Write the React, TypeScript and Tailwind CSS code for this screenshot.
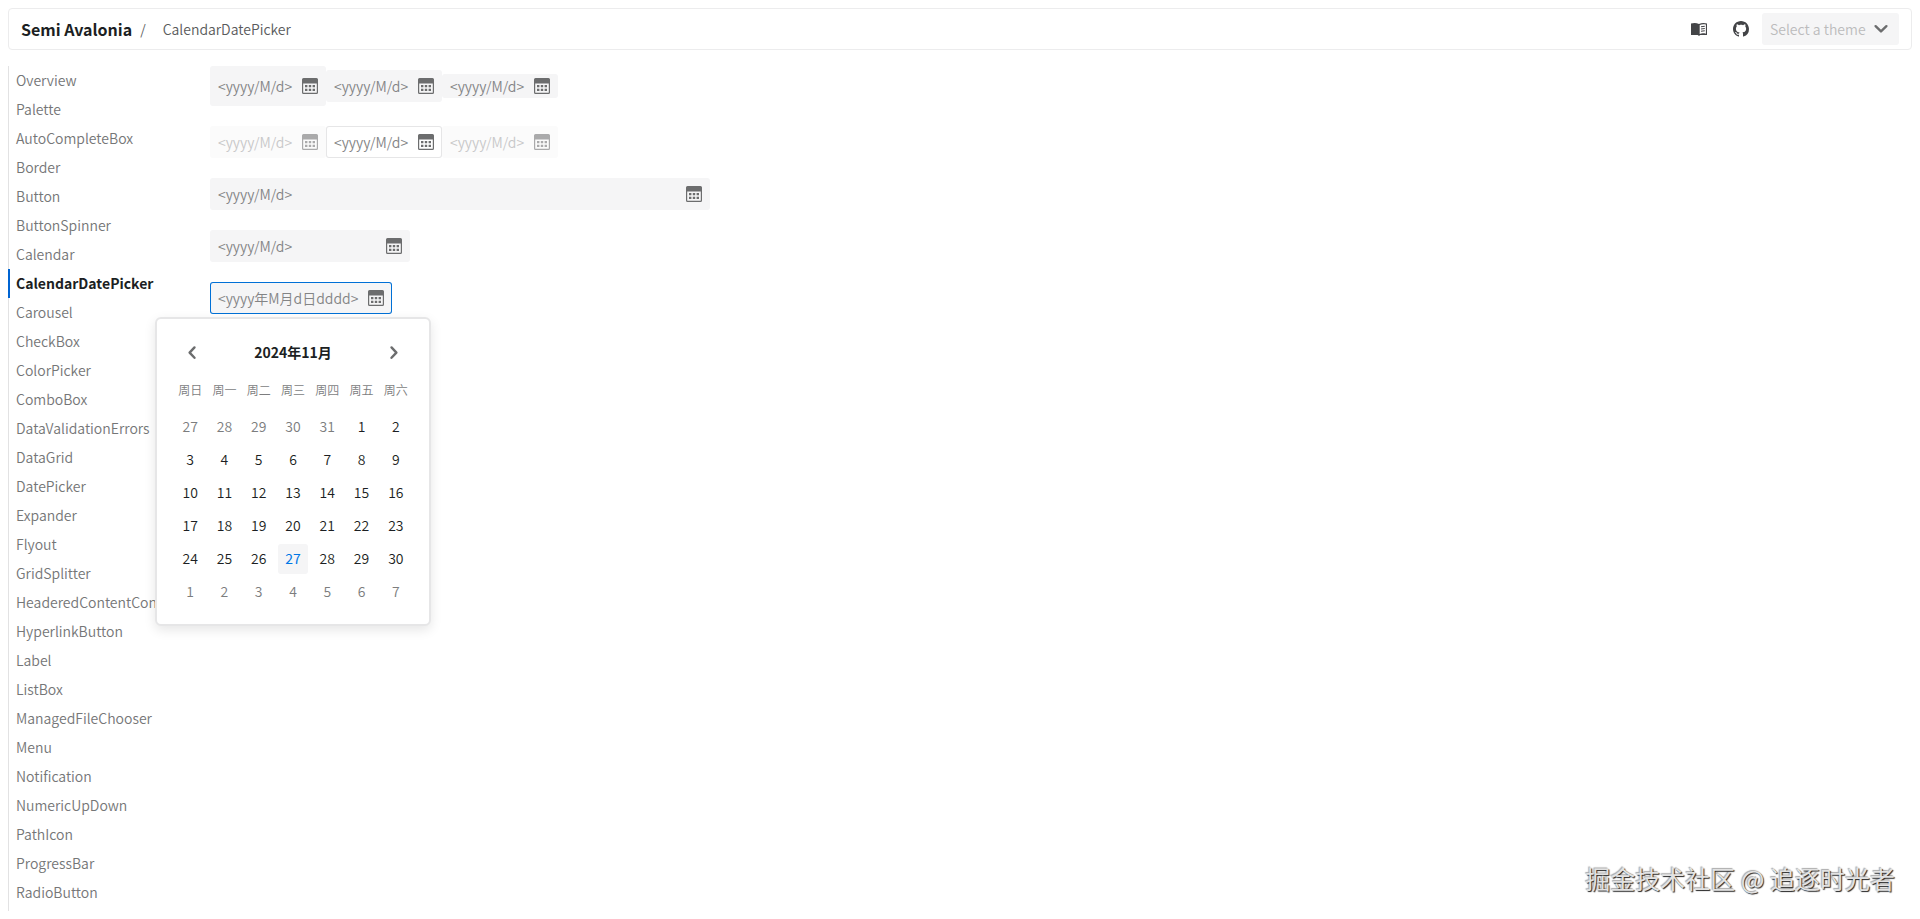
import React from "react";

const navItems = [
  "Overview",
  "Palette",
  "AutoCompleteBox",
  "Border",
  "Button",
  "ButtonSpinner",
  "Calendar",
  "CalendarDatePicker",
  "Carousel",
  "CheckBox",
  "ColorPicker",
  "ComboBox",
  "DataValidationErrors",
  "DataGrid",
  "DatePicker",
  "Expander",
  "Flyout",
  "GridSplitter",
  "HeaderedContentControl",
  "HyperlinkButton",
  "Label",
  "ListBox",
  "ManagedFileChooser",
  "Menu",
  "Notification",
  "NumericUpDown",
  "PathIcon",
  "ProgressBar",
  "RadioButton",
];

const weekDays = ["周日", "周一", "周二", "周三", "周四", "周五", "周六"];

const weeks = [
  [27, 28, 29, 30, 31, 1, 2],
  [3, 4, 5, 6, 7, 8, 9],
  [10, 11, 12, 13, 14, 15, 16],
  [17, 18, 19, 20, 21, 22, 23],
  [24, 25, 26, 27, 28, 29, 30],
  [1, 2, 3, 4, 5, 6, 7],
];

const CalendarIcon = () => (
  <svg viewBox="0 0 16 16" className="size-4" aria-hidden="true">
    <path
      fill="currentColor"
      fillRule="evenodd"
      d="M1.5 0h13A1.5 1.5 0 0 1 16 1.5v13a1.5 1.5 0 0 1-1.5 1.5h-13A1.5 1.5 0 0 1 0 14.5v-13A1.5 1.5 0 0 1 1.5 0zM1.200 5.400v8.800c0 .4.2.6.6.6h12.400c.4 0 .6-.2.6-.6V5.400z"
    />
    <path
      fill="currentColor"
      d="M3 7h2.4v2.2H3zM6.8 7h2.4v2.2H6.8zM10.6 7H13v2.2h-2.4zM3 10.8h2.4V13H3zM6.8 10.8h2.4V13H6.8zM10.6 10.8H13V13h-2.4z"
    />
  </svg>
);

const BookIcon = () => (
  <svg viewBox="0 0 16 16" className="size-4" aria-hidden="true">
    <path
      fill="currentColor"
      fillRule="evenodd"
      d="M0 2.6C2.6 1.6 5.400 1.7 8 3c2.600-1.300 5.400-1.400 8-.4V14H9.200c-.2.500-.6.700-1.200.7s-1-.2-1.200-.7H0zM8.700 4v9c1.900-.8 4-.8 6.200-.2V3.500C12.700 2.900 10.600 3.100 8.700 4z"
    />
    <path
      stroke="currentColor"
      strokeWidth="1.100"
      d="M10 5.800l3.800-.5M10 8l3.800-.5M10 10.200l3.800-.5"
    />
  </svg>
);

const GithubIcon = () => (
  <svg viewBox="0 0 16 16" className="size-4" aria-hidden="true">
    <path
      fill="currentColor"
      d="M8 0C3.580 0 0 3.580 0 8c0 3.540 2.290 6.530 5.470 7.590.4.070.55-.17.55-.38 0-.19-.01-.82-.01-1.490-2.010.37-2.530-.49-2.690-.94-.09-.23-.48-.94-.82-1.130-.28-.15-.68-.52-.01-.53.63-.01 1.080.58 1.230.82.72 1.210 1.870.87 2.330.66.07-.52.28-.87.51-1.070-1.780-.2-3.640-.89-3.640-3.950 0-.87.31-1.590.82-2.150-.08-.2-.36-1.020.08-2.120 0 0 .67-.21 2.200.82.64-.18 1.320-.27 2-.27s1.360.09 2 .27c1.530-1.040 2.200-.82 2.200-.82.44 1.100.16 1.920.08 2.120.51.56.82 1.270.82 2.150 0 3.070-1.870 3.750-3.650 3.950.29.25.54.73.54 1.480 0 1.070-.01 1.930-.01 2.200 0 .21.15.46.55.38A8.010 8.010 0 0 0 16 8c0-4.420-3.580-8-8-8z"
    />
  </svg>
);

const Chevron = ({ d }: { d: string }) => (
  <svg viewBox="0 0 16 16" className="size-4" fill="none" aria-hidden="true">
    <path
      d={d}
      stroke="currentColor"
      strokeWidth="2.400"
      strokeLinecap="round"
      strokeLinejoin="round"
    />
  </svg>
);

type PickerProps = {
  label: string;
  className?: string;
  placeholder?: string;
  disabled?: boolean;
};

function DatePicker({
  label,
  className = "h-8 w-[116px] bg-[#f5f5f6]",
  placeholder = "<yyyy/M/d>",
  disabled = false,
}: PickerProps) {
  return (
    <div
      className={`flex items-center gap-2 rounded-[3px] ${className} ${
        disabled ? "text-[#aaaaab]" : "text-[#6c6d6e]"
      }`}
    >
      <input
        type="text"
        aria-label={label}
        placeholder={placeholder}
        disabled={disabled}
        className={`ml-2 min-w-0 flex-1 bg-transparent outline-none ${
          disabled ? "placeholder:text-[#c8c8c9]" : "placeholder:text-[#838485]"
        }`}
      />
      <button
        type="button"
        aria-label="Open calendar"
        disabled={disabled}
        className="mr-2"
      >
        <CalendarIcon />
      </button>
    </div>
  );
}

function CalendarPopup() {
  return (
    <div className="absolute top-full -left-[55px] z-10 mt-[3px] w-[276px] rounded-md border-2 border-[#e6e6e7] bg-white px-4 pt-[15px] pb-4 shadow-[0_4px_12px_rgba(0,0,0,0.1)]">
      <div className="flex h-9 items-center justify-between px-[11px] text-[#6c6d6e]">
        <button type="button" aria-label="Previous month">
          <Chevron d="M10.500 3.400L5.600 8.600l4.900 5.200" />
        </button>
        <button type="button" className="font-semibold text-[#1c1f23]">
          2024年11月
        </button>
        <button type="button" aria-label="Next month">
          <Chevron d="M5.500 3.400L10.400 8.600l-4.900 5.200" />
        </button>
      </div>
      <table className="w-full table-fixed text-center">
        <thead>
          <tr className="h-10 text-xs text-[#7c7d7e]">
            {weekDays.map((day) => (
              <th key={day} className="p-0 font-[350]">
                {day}
              </th>
            ))}
          </tr>
        </thead>
        <tbody>
          {weeks.map((week, row) => (
            <tr key={row} className="h-[33px]">
              {week.map((day, col) => {
                const outside = (row === 0 && day > 7) || row === 5;
                const today = row === 4 && day === 27;
                return (
                  <td key={col} className="p-0">
                    <button
                      type="button"
                      className={`size-[30px] rounded-[3px] align-middle ${
                        today
                          ? "bg-[#f5f5f6] font-normal text-[#0077e6]"
                          : outside
                            ? "text-[#7c7d7e]"
                            : "text-[#1c1f23]"
                      }`}
                    >
                      {day}
                    </button>
                  </td>
                );
              })}
            </tr>
          ))}
        </tbody>
      </table>
    </div>
  );
}

export default function App() {
  return (
    <div className="flex h-screen flex-col gap-4 overflow-hidden bg-white p-2 font-['Noto_Sans_CJK_SC',sans-serif] text-sm leading-[21px] font-[350] text-[#1c1f23]">
      <header className="flex h-[42px] shrink-0 items-center rounded-[4px] border border-[#ececed] px-3">
        <h1 className="text-base font-semibold">Semi Avalonia</h1>
        <span className="ml-2 text-[#5a5b5c]">/</span>
        <span className="ml-[17px] text-[#5a5b5c]">CalendarDatePicker</span>
        <div className="ml-auto flex items-center text-[#434447]">
          <a href="#docs" aria-label="Documentation" className="mr-[26px]">
            <BookIcon />
          </a>
          <a href="#github" aria-label="GitHub" className="mr-[13px]">
            <GithubIcon />
          </a>
          <div className="relative">
            <select
              aria-label="Theme"
              className="h-8 w-[137px] appearance-none rounded-[3px] bg-[#f5f5f6] pl-2 text-[#bcbcbd]"
            >
              <option>Select a theme</option>
            </select>
            <span className="pointer-events-none absolute top-2 right-2.5 text-[#6c6d6e]">
              <Chevron d="M2.600 5.200L8 10.400l5.400-5.200" />
            </span>
          </div>
        </div>
      </header>

      <div className="flex min-h-0 flex-1">
        <nav className="w-[162px] shrink-0 border-l border-[#e2e2e3]">
          <ul>
            {navItems.map((item) => (
              <li key={item} className="-ml-px">
                <a
                  href={`#${item}`}
                  className={`block border-l-2 py-1 pl-1.5 ${
                    item === "CalendarDatePicker"
                      ? "border-[#0064d2] font-semibold"
                      : "border-transparent text-[#757677]"
                  }`}
                >
                  {item}
                </a>
              </li>
            ))}
          </ul>
        </nav>

        <main className="ml-10 flex flex-1 flex-col items-start gap-5">
          <div className="flex items-center">
            <DatePicker label="Large" className="h-10 w-[116px] bg-[#f5f5f6]" />
            <DatePicker label="Default" />
            <DatePicker label="Small" className="h-6 w-[116px] bg-[#f5f5f6]" />
          </div>
          <div className="flex items-center">
            <DatePicker
              label="Disabled"
              className="h-8 w-[116px] bg-[#fbfbfb]"
              disabled
            />
            <DatePicker
              label="Bordered"
              className="h-8 w-[116px] ring-1 ring-[#e6e6e7] ring-inset"
            />
            <DatePicker
              label="Bordered disabled"
              className="h-8 w-[116px] bg-[#fbfbfb]"
              disabled
            />
          </div>
          <DatePicker label="Wide" className="h-8 w-[500px] bg-[#f5f5f6]" />
          <DatePicker label="Medium" className="h-8 w-[200px] bg-[#f5f5f6]" />
          <div className="relative">
            <DatePicker
              label="Custom format"
              placeholder="<yyyy年M月d日dddd>"
              className="h-8 w-[182px] bg-[#f5f5f6] ring-1 ring-[#0070d6] ring-inset"
            />
            <CalendarPopup />
          </div>
        </main>
      </div>

      {/* 浮水印 */}
      <p className="pointer-events-none absolute right-[25px] bottom-[23px] text-[25px] leading-9 font-normal text-[#e2e2e2] [text-shadow:1px_1px_1px_#222,-1px_-1px_1px_#aaa]">
        掘金技术社区 @ 追逐时光者
      </p>
    </div>
  );
}
